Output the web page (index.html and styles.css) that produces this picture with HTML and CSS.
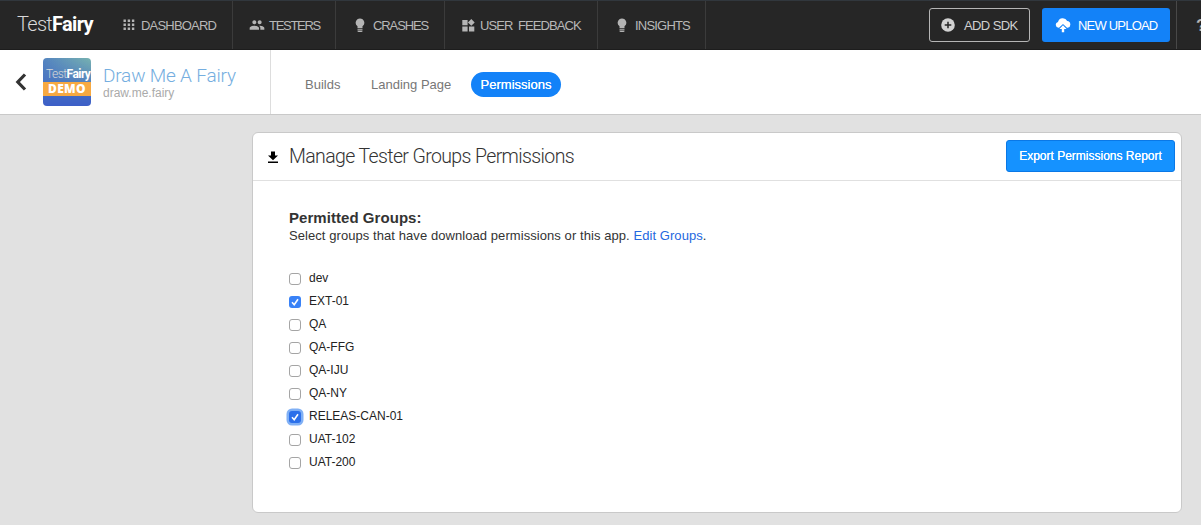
FILE: index.html
```html
<!DOCTYPE html>
<html lang="en">
<head>
<meta charset="utf-8">
<title>TestFairy - Permissions</title>
<link rel="stylesheet" href="styles.css">
</head>
<body>
<header class="topbar">
  <a class="brand"><span class="brand-thin">Test</span><span class="brand-bold">Fairy</span></a>
  <nav class="mainnav">
    <a class="nav-item nav-dashboard"><svg class="icon" width="12" height="12" viewBox="0 0 12 12"><path d="M0.5 0.5h2.4v2.4H.5zM4.7.5h2.4v2.4H4.7zM8.9.5h2.4v2.4H8.9zM.5 4.5h2.4v2.4H.5zM4.7 4.5h2.4v2.4H4.7zM8.9 4.5h2.4v2.4H8.9zM.5 8.5h2.4v2.4H.5zM4.7 8.5h2.4v2.4H4.7zM8.9 8.5h2.4v2.4H8.9z"/></svg><span class="label">DASHBOARD</span></a>
    <a class="nav-item nav-testers"><svg class="icon" width="16" height="16" viewBox="0 0 24 24"><path d="M16 11c1.66 0 2.99-1.34 2.99-3S17.66 5 16 5s-3 1.34-3 3 1.34 3 3 3zm-8 0c1.66 0 2.99-1.34 2.99-3S9.66 5 8 5 5 6.34 5 8s1.34 3 3 3zm0 2c-2.33 0-7 1.17-7 3.5V19h14v-2.500c0-2.330-4.670-3.500-7-3.500zm8 0c-.29 0-.62.02-.97.05 1.160.84 1.970 1.970 1.970 3.450V19h6v-2.500c0-2.330-4.670-3.500-7-3.500z"/></svg><span class="label">TESTERS</span></a>
    <a class="nav-item nav-crashes"><svg class="icon" width="10" height="15" viewBox="0 0 10 15"><path d="M5 .5a4.300 4.300 0 0 0-2.500 7.800V10h5V8.300A4.300 4.300 0 0 0 5 .5zM2.500 10.800h5v1h-5zM2.500 12.600h5v.9L6.500 14h-3l-1-.5z"/></svg><span class="label">CRASHES</span></a>
    <a class="nav-item nav-feedback"><svg class="icon" width="13" height="13" viewBox="0 0 13 13"><path d="M.3 1h5.300v5.200H.3zM.3 7.400h5.300v5H.3zM7 7.400h5.300v5H7zM9.300 0l3.400 3.400-3.400 3.400-3.400-3.400z"/></svg><span class="label">USER&nbsp; FEEDBACK</span></a>
    <a class="nav-item nav-insights"><svg class="icon" width="10" height="15" viewBox="0 0 10 15"><path d="M5 .5a4.300 4.300 0 0 0-2.500 7.800V10h5V8.300A4.300 4.300 0 0 0 5 .5zM2.500 10.800h5v1h-5zM2.500 12.600h5v.9L6.500 14h-3l-1-.5z"/></svg><span class="label">INSIGHTS</span></a>
  </nav>
  <div class="actions">
    <button class="btn-sdk"><svg width="14" height="14" viewBox="0 0 14 14"><circle cx="7" cy="7" r="6.800" fill="#d2d2d2"/><path d="M7 3.700v6.600M3.700 7h6.600" stroke="#262626" stroke-width="1.500"/></svg><span class="label">ADD SDK</span></button>
    <button class="btn-upload"><svg width="16" height="15" viewBox="0 0 16 15" fill="#fff"><path d="M3.600 9.800a3 3 0 0 1-.6-5.900A4.900 4.900 0 0 1 12.200 3.100a3.400 3.400 0 0 1 .5 6.700H12L8 5.900 4 9.800z"/><path d="M8 7.200l3.600 3.700H9.200V14.200H6.800V10.900H4.400z"/></svg><span class="label">NEW UPLOAD</span></button>
    <div class="help">?</div>
  </div>
</header>
<section class="appbar">
  <div class="app">
    <svg class="back" width="12" height="18" viewBox="0 0 12 18"><path d="M10 1.500L2.800 9l7.200 7.500" fill="none" stroke="#333" stroke-width="3.200"/></svg>
    <div class="app-icon">
      <div class="logo"><span class="brand-thin">Test</span><span class="brand-bold">Fairy</span></div>
      <div class="demo">DEMO</div>
    </div>
    <div class="app-text">
      <div class="app-name">Draw Me A Fairy</div>
      <div class="app-id">draw.me.fairy</div>
    </div>
  </div>
  <nav class="tabs">
    <a class="tab tab-builds">Builds</a>
    <a class="tab tab-landing">Landing Page</a>
    <a class="tab tab-active">Permissions</a>
  </nav>
</section>
<main class="card">
  <div class="card-head">
    <svg class="download" width="12" height="13" viewBox="0 0 12 13"><path d="M4 .5h4v4h3L6 9.300 1 4.500h3zM1 10.600h10v1.400H1z"/></svg>
    <h1 class="title">Manage Tester Groups Permissions</h1>
    <button class="btn-export">Export Permissions Report</button>
  </div>
  <div class="card-body">
    <h2 class="subtitle">Permitted Groups:</h2>
    <p class="hint">Select groups that have download permissions or this app. <a class="link">Edit Groups</a>.</p>
    <ul class="groups">
      <li class="group"><span class="box"></span><span>dev</span></li>
      <li class="group"><span class="box checked"><svg width="12" height="12" viewBox="0 0 12 12"><path class="tick" d="M3 6.300L5.200 8.700L9 3.200"/></svg></span><span>EXT-01</span></li>
      <li class="group"><span class="box"></span><span>QA</span></li>
      <li class="group"><span class="box"></span><span>QA-FFG</span></li>
      <li class="group"><span class="box"></span><span>QA-IJU</span></li>
      <li class="group"><span class="box"></span><span>QA-NY</span></li>
      <li class="group"><span class="box checked focused"><svg width="12" height="12" viewBox="0 0 12 12"><path class="tick" d="M3 6.300L5.200 8.700L9 3.200"/></svg></span><span>RELEAS-CAN-01</span></li>
      <li class="group"><span class="box"></span><span>UAT-102</span></li>
      <li class="group"><span class="box"></span><span>UAT-200</span></li>
    </ul>
  </div>
</main>
</body>
</html>
```

FILE: styles.css
```css
* { box-sizing: border-box; }
body {
  margin: 0;
  height: 525px;
  overflow: hidden;
  background: #e1e1e1;
  font-family: "Liberation Sans", Arial, sans-serif;
  color: #333;
}
button { font-family: inherit; margin: 0; padding: 0; }
.label { white-space: nowrap; }

.topbar {
  display: flex;
  height: 50px;
  background: #262626;
  border-top: 1px solid #31373d;
  border-bottom: 1px solid #1d1d1d;
}
.brand {
  width: 106px;
  padding: 11px 0 0 17px;
  font: 20px/24px Roboto, sans-serif;
  letter-spacing: -0.7px;
  color: #fff;
  white-space: nowrap;
  flex: none;
}
.brand-thin { font-weight: 300; color: #d8d8d8; }
.brand-bold { font-weight: 700; }
.mainnav { display: flex; flex: none; }
.nav-item {
  display: flex;
  align-items: center;
  border-right: 1px solid #3b3b3b;
  font-size: 13px;
  color: #b8b8b8;
  flex: none;
}
.icon { fill: #b4b4b4; flex: none; }
.nav-dashboard { width: 127px; padding-left: 17px; gap: 6px; letter-spacing: -0.8px; }
.nav-testers { width: 103px; padding-left: 16px; gap: 4px; letter-spacing: -1.3px; }
.nav-crashes { width: 109px; padding-left: 19px; gap: 8px; letter-spacing: -1.1px; }
.nav-feedback { width: 153px; padding-left: 17px; gap: 5px; letter-spacing: -0.9px; }
.nav-insights { width: 108px; padding-left: 19px; gap: 8px; letter-spacing: -0.8px; }
.actions { display: flex; flex: 1; min-width: 0; padding-left: 223px; }
.btn-sdk, .btn-upload {
  display: flex;
  align-items: center;
  height: 34px;
  margin-top: 7px;
  border-radius: 3px;
  font-size: 13px;
  flex: none;
}
.btn-sdk {
  width: 101px;
  padding-left: 11px;
  gap: 9px;
  border: 1px solid #b5b5b5;
  background: transparent;
  color: #d0d0d0;
  letter-spacing: -0.6px;
}
.btn-upload {
  width: 128px;
  margin-left: 12px;
  padding-left: 13px;
  gap: 7px;
  border: 0;
  background: #1382f8;
  color: #fff;
  letter-spacing: -0.8px;
}
.help {
  flex: 1;
  min-width: 0;
  margin-left: 6px;
  padding: 15px 0 0 19px;
  border-left: 1px solid #484848;
  font: bold 17px/20px "Liberation Sans", Arial, sans-serif;
  color: #b4b4b4;
}
.topbar > .brand { width: 106px; }

.appbar {
  display: flex;
  height: 65px;
  background: #fff;
  border-bottom: 1px solid #c9c9c9;
}
.app {
  display: flex;
  width: 271px;
  border-right: 1px solid #ddd;
}
.back { margin: 23px 16px 0 15px; flex: none; }
.app-icon {
  width: 48px;
  height: 48px;
  margin-top: 8px;
  border-radius: 4px;
  overflow: hidden;
  flex: none;
  background: linear-gradient(to bottom, transparent, #436bc2 75%, #3d5fc8), linear-gradient(to right, #5484c0, #78b3b0);
}
.logo {
  height: 24px;
  padding: 8px 0 0 3px;
  font: 12px/16px Roboto, sans-serif;
  letter-spacing: -0.55px;
  color: #fff;
  white-space: nowrap;
}
.demo {
  height: 14px;
  background: #f7a941;
  color: #fff;
  text-align: center;
  font: 800 12px/14px "Open Sans", sans-serif;
  letter-spacing: 0.300px;
}
.app-text { padding: 14px 0 0 12px; white-space: nowrap; }
.app-name { font: 300 19px/24px Roboto, sans-serif; letter-spacing: -0.18px; color: #75aee0; }
.app-id { font-size: 12px; line-height: 10px; color: #aaa; }
.tabs { display: flex; padding-top: 22px; font-size: 13px; line-height: 25px; color: #777; }
.tab { white-space: nowrap; }
.tab-builds { width: 66px; margin-left: 34px; }
.tab-landing { width: 100px; }
.tab-active {
  width: 90px;
  height: 25px;
  border-radius: 13px;
  background: #1382f8;
  color: #fff;
  text-align: center;
  text-shadow: 0 0 0.500px #fff;
}

.card {
  width: 930px;
  height: 381px;
  margin: 17px 0 0 252px;
  border: 1px solid #c9c9c9;
  border-radius: 6px;
  background: #fff;
}
.card-head { display: flex; height: 48px; border-bottom: 1px solid #e0e0e0; }
.download { margin: 18px 10px 0 14px; flex: none; }
.title { flex: 1; margin: 0; padding-top: 11px; font: 300 19.500px/26px Roboto, sans-serif; letter-spacing: -0.62px; }
.btn-export {
  width: 169px;
  height: 32px;
  margin: 7px 6px 0 0;
  border: 1px solid #0a78e6;
  border-radius: 3px;
  background: #1592ff;
  color: #fff;
  font-size: 12px;
  text-shadow: 0 0 0.500px #fff;
}
.card-body { padding: 28px 36px; }
.subtitle { margin: 0; font-size: 15px; line-height: 18px; letter-spacing: 0.05px; }
.hint { margin: 0; font-size: 13px; line-height: 18px; letter-spacing: 0.07px; }
.link { color: #2468e0; }
.groups { margin: 21px 0 0; padding: 0; list-style: none; font-size: 12px; color: #222; }
.group { display: flex; align-items: center; height: 23px; gap: 8px; }
.box {
  width: 12px;
  height: 12px;
  margin-top: 3px;
  border: 1px solid #a5a5a5;
  border-radius: 3px;
  background: #fff;
}
.checked { border: 0; background: #3982f7; }
.checked svg { display: block; }
.focused { box-shadow: 0 0 0 2.500px #80b0f5; background: #2c70ea; }
.tick { fill: none; stroke: #fff; stroke-width: 1.600; }
```
